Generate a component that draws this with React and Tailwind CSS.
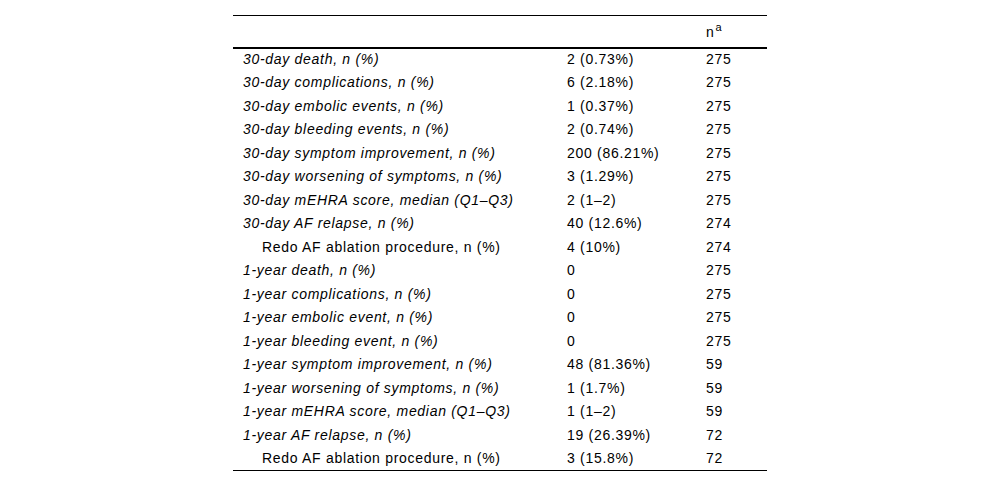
const rows = [
  { label: '30-day death, n (%)', value: '2 (0.73%)', n: '275' },
  { label: '30-day complications, n (%)', value: '6 (2.18%)', n: '275' },
  { label: '30-day embolic events, n (%)', value: '1 (0.37%)', n: '275' },
  { label: '30-day bleeding events, n (%)', value: '2 (0.74%)', n: '275' },
  { label: '30-day symptom improvement, n (%)', value: '200 (86.21%)', n: '275' },
  { label: '30-day worsening of symptoms, n (%)', value: '3 (1.29%)', n: '275' },
  { label: '30-day mEHRA score, median (Q1–Q3)', value: '2 (1–2)', n: '275' },
  { label: '30-day AF relapse, n (%)', value: '40 (12.6%)', n: '274' },
  { label: 'Redo AF ablation procedure, n (%)', value: '4 (10%)', n: '274', sub: true },
  { label: '1-year death, n (%)', value: '0', n: '275' },
  { label: '1-year complications, n (%)', value: '0', n: '275' },
  { label: '1-year embolic event, n (%)', value: '0', n: '275' },
  { label: '1-year bleeding event, n (%)', value: '0', n: '275' },
  { label: '1-year symptom improvement, n (%)', value: '48 (81.36%)', n: '59' },
  { label: '1-year worsening of symptoms, n (%)', value: '1 (1.7%)', n: '59' },
  { label: '1-year mEHRA score, median (Q1–Q3)', value: '1 (1–2)', n: '59' },
  { label: '1-year AF relapse, n (%)', value: '19 (26.39%)', n: '72' },
  { label: 'Redo AF ablation procedure, n (%)', value: '3 (15.8%)', n: '72', sub: true },
];

export default function App() {
  return (
    <div className="w-[1000px] h-[490px] bg-white flex justify-center pt-[15px] font-['Liberation_Sans',Arial,sans-serif] text-[14px] tracking-[0.7px] text-black">
      <table className="w-[534px] h-fit border-collapse table-fixed border-t border-b border-black">
        <colgroup>
          <col className="w-[324px]" />
          <col className="w-[139px]" />
          <col className="w-[71px]" />
        </colgroup>
        <thead>
          <tr className="h-[32px] border-b-2 border-black">
            <th />
            <th />
            <th className="text-left font-normal px-[10px] pt-[2px]">
              n<sup className="text-[11px] tracking-normal ml-[1px]">a</sup>
            </th>
          </tr>
        </thead>
        <tbody>
          {rows.map((r, i) => (
            <tr key={i} className="h-[23.5px]">
              <td className={r.sub ? 'pl-[29px] pr-[10px]' : 'px-[10px] italic'}>{r.label}</td>
              <td className="px-[10px]">{r.value}</td>
              <td className="px-[10px]">{r.n}</td>
            </tr>
          ))}
        </tbody>
      </table>
    </div>
  );
}
